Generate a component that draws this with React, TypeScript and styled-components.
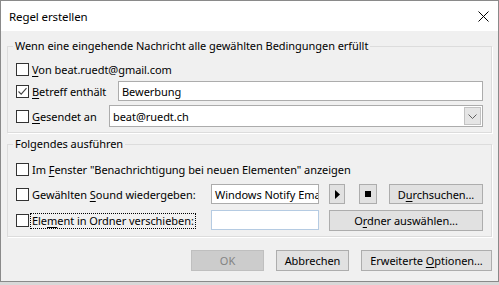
import React from 'react';
import styled, { createGlobalStyle } from 'styled-components';

const Global = createGlobalStyle`
  html, body { margin: 0; padding: 0; background: #d9d9d9; }
  body {
    font-family: "Noto Sans", "Segoe UI", sans-serif;
    font-size: 11px;
    letter-spacing: -0.05px;
    color: #000;
  }
  * { box-sizing: border-box; }
`;

const Window = styled.div`
  width: 499px;
  height: 282px;
  display: flex;
  flex-direction: column;
  background: #f0f0f0;
  border: 1px solid #8a8a8a;
`;

const TitleBar = styled.div`
  height: 30px;
  flex: none;
  background: #fff;
  display: flex;
  align-items: center;
  justify-content: space-between;
  padding: 0 9px 0 8px;
`;

const Title = styled.span`
  font-size: 11.5px;
  letter-spacing: -0.1px;
`;

const Body = styled.div`
  flex: 1;
  display: flex;
  flex-direction: column;
  padding: 6px 6px 0 6px;
`;

const Group = styled.fieldset<{ $mt?: number; $pb?: number }>`
  margin: ${(p) => p.$mt ?? 0}px 0 0 0;
  padding: 0 8px ${(p) => p.$pb ?? 5}px 8px;
  min-width: 0;
  border: 1px solid #dcdcdc;
  box-shadow: 1px 1px 0 #fff;
`;

const Legend = styled.legend`
  padding: 0 2px;
  margin-left: -3px;
  line-height: 16px;
  font-size: 11px;
`;

const Row = styled.div<{ $mt: number; $h?: number }>`
  display: flex;
  align-items: center;
  height: ${(p) => p.$h ?? 20}px;
  margin-top: ${(p) => p.$mt}px;
`;

const Box = styled.span`
  width: 13px;
  height: 13px;
  flex: none;
  border: 1px solid #333;
  background: #fff;
  display: flex;
  align-items: center;
  justify-content: center;
`;

const Label = styled.span<{ $w?: number }>`
  margin-left: 3px;
  white-space: nowrap;
  ${(p) => (p.$w ? `width: ${p.$w}px; flex: none;` : '')}
`;

const FocusText = styled.span`
  outline: 1px dotted #000;
  outline-offset: 0;
  padding: 0 1px;
  margin-left: -1px;
  line-height: 14px;
  display: inline-block;
`;

const Key = styled.u`
  text-decoration: underline;
  text-underline-offset: 2px;
  text-decoration-thickness: 1px;
`;

const TextBox = styled.div<{ $w?: number; $blue?: boolean }>`
  height: 20px;
  ${(p) => (p.$w ? `width: ${p.$w}px; flex: none;` : 'flex: 1;')}
  border: 1px solid ${(p) => (p.$blue ? '#b5cbe2' : '#acacac')};
  background: #fff;
  padding: 0 3px;
  display: flex;
  align-items: center;
  overflow: hidden;
  white-space: nowrap;
`;

const Combo = styled.div`
  flex: 1;
  height: 22px;
  border: 1px solid #acacac;
  background: #fff;
  display: flex;
  align-items: center;
  justify-content: space-between;
  padding: 0 1px 0 3px;
`;

const DropButton = styled.span`
  width: 17px;
  height: 18px;
  background: #e5e5e5;
  border: 1px solid #c2c2c2;
  display: flex;
  align-items: center;
  justify-content: center;
`;

const Button = styled.button<{ $w: number; $ml?: number; $h?: number }>`
  width: ${(p) => p.$w}px;
  height: ${(p) => p.$h ?? 21}px;
  margin: 0 0 0 ${(p) => p.$ml ?? 0}px;
  flex: none;
  padding: 0;
  font-family: inherit;
  font-size: 11px;
  letter-spacing: -0.05px;
  color: #000;
  background: #e1e1e1;
  border: 1px solid #adadad;
  display: flex;
  align-items: center;
  justify-content: center;
  white-space: nowrap;
  &:disabled {
    background: #cccccc;
    border-color: #bfbfbf;
    color: #838383;
  }
`;

const Footer = styled.div`
  display: flex;
  justify-content: flex-end;
  gap: 12px;
  margin-top: 13px;
`;

const Check = ({ checked }: { checked?: boolean }) => (
  <Box>
    {checked && (
      <svg width="11" height="11" viewBox="0 0 11 11">
        <path d="M1.5 5.5 L4.2 8.2 L9.5 2.2" fill="none" stroke="#444" strokeWidth="1.1" />
      </svg>
    )}
  </Box>
);

export default function App() {
  return (
    <>
      <Global />
      <Window>
        <TitleBar>
          <Title>Regel erstellen</Title>
          <svg width="11" height="11" viewBox="0 0 11 11">
            <path d="M0.5 0.5 L10.5 10.5 M10.5 0.5 L0.5 10.5" stroke="#000" strokeWidth="1" />
          </svg>
        </TitleBar>
        <Body>
          <Group $mt={1} $pb={5}>
            <Legend>Wenn eine eingehende Nachricht alle gewählten Bedingungen erfüllt</Legend>
            <Row $mt={5}>
              <Check />
              <Label>
                <Key>V</Key>on beat.ruedt@gmail.com
              </Label>
            </Row>
            <Row $mt={2}>
              <Check checked />
              <Label $w={86}>
                <Key>B</Key>etreff enthält
              </Label>
              <TextBox>Bewerbung</TextBox>
            </Row>
            <Row $mt={4} $h={22}>
              <Check />
              <Label $w={77}>
                <Key>G</Key>esendet an
              </Label>
              <Combo>
                <span>beat@ruedt.ch</span>
                <DropButton>
                  <svg width="9" height="5" viewBox="0 0 9 5">
                    <path d="M0.5 0.5 L4.5 4.5 L8.5 0.5" fill="none" stroke="#606060" strokeWidth="1" />
                  </svg>
                </DropButton>
              </Combo>
            </Row>
          </Group>
          <Group $mt={3} $pb={6}>
            <Legend>Folgendes ausführen</Legend>
            <Row $mt={7}>
              <Check />
              <Label>
                Im <Key>F</Key>enster "Benachrichtigung bei neuen Elementen" anzeigen
              </Label>
            </Row>
            <Row $mt={5}>
              <Check />
              <Label $w={179}>
                Gewählten <Key>S</Key>ound wiedergeben:
              </Label>
              <TextBox $w={108}>Windows Notify Email</TextBox>
              <Button $w={16} $ml={10} $h={20} aria-label="play">
                <svg width="5" height="9" viewBox="0 0 5 9">
                  <path d="M0 0 L5 4.5 L0 9 Z" fill="#000" />
                </svg>
              </Button>
              <Button $w={18} $ml={14} $h={20} aria-label="stop">
                <svg width="6" height="6" viewBox="0 0 6 6">
                  <rect width="6" height="6" fill="#000" />
                </svg>
              </Button>
              <Button $w={94} $ml={12} $h={20}>
                <span>
                  D<Key>u</Key>rchsuchen...
                </span>
              </Button>
            </Row>
            <Row $mt={6}>
              <Check />
              <Label $w={179}>
                <FocusText>
                  Ele<Key>m</Key>ent in Ordner verschieben:
                </FocusText>
              </Label>
              <TextBox $w={108} $blue />
              <Button $w={154} $ml={10}>
                <span>
                  O<Key>r</Key>dner auswählen...
                </span>
              </Button>
            </Row>
          </Group>
          <Footer>
            <Button $w={73} disabled>
              <span>OK</span>
            </Button>
            <Button $w={73}>
              <span>Abbrechen</span>
            </Button>
            <Button $w={131}>
              <span>
                Erweiterte <Key>O</Key>ptionen...
              </span>
            </Button>
          </Footer>
        </Body>
      </Window>
    </>
  );
}
